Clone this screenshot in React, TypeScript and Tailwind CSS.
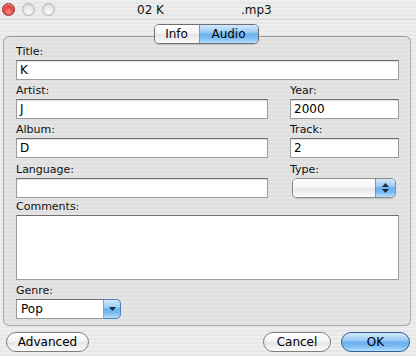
const font = { fontFamily: '"DejaVu Sans", "Liberation Sans", sans-serif' }

function Label({ children, className = '' }: { children: string; className?: string }) {
  return <div className={`h-[14px] text-[11px] leading-[14px] text-[#111] ${className}`}>{children}</div>
}

function Field({ value = '', className = '' }: { value?: string; className?: string }) {
  return (
    <div
      className={`flex h-[20px] items-center border border-[#9c9c9c] border-t-[#6e6e6e] bg-white pl-[3px] text-[12px] text-black shadow-[inset_0_1px_1px_rgba(0,0,0,0.12)] ${className}`}
    >
      {value}
    </div>
  )
}

function Light({ red }: { red?: boolean }) {
  return red ? (
    <div className="h-[13px] w-[13px] rounded-full border border-[#9a2a2a] bg-[radial-gradient(circle_at_50%_70%,#ff8a80_0%,#e0403a_55%,#b8221f_100%)] shadow-[inset_0_1px_1px_rgba(255,255,255,0.6)]" />
  ) : (
    <div className="h-[13px] w-[13px] rounded-full border border-[#b4b4b4] bg-[radial-gradient(circle_at_50%_70%,#fbfbfb_0%,#e2e2e2_60%,#cfcfcf_100%)]" />
  )
}

const aqua =
  'bg-[linear-gradient(to_bottom,#d2e9fd_0%,#9ccbf3_40%,#6bb0ee_50%,#7dbdf3_75%,#b7e0ff_100%)]'
const white =
  'bg-[linear-gradient(to_bottom,#ffffff_0%,#f5f5f5_45%,#e6e6e6_55%,#fbfbfb_100%)]'

function Pill({ children, blue, className = '' }: { children: string; blue?: boolean; className?: string }) {
  return (
    <div
      className={`flex h-[20px] items-center justify-center rounded-full border text-[12px] text-black ${
        blue ? `border-[#2c5f96] ${aqua}` : `border-[#7e7e7e] ${white}`
      } ${className}`}
    >
      {children}
    </div>
  )
}

export default function App() {
  return (
    <div
      style={font}
      className="flex h-[356px] w-[416px] flex-col overflow-hidden bg-[#ececec] bg-[repeating-linear-gradient(to_bottom,#eeeeee_0px,#eeeeee_2px,#e7e7e7_2px,#e7e7e7_4px)]"
    >
      {/* title bar */}
      <div className="flex h-[20px] items-center border-b border-[#d6d6d6] pl-[2px]">
        <div className="flex gap-[7px]">
          <Light red />
          <Light />
          <Light />
        </div>
        <div className="ml-[82px] flex gap-[77px] text-[12px] text-[#111]">
          <span>02 K</span>
          <span>.mp3</span>
        </div>
      </div>

      {/* tabs */}
      <div className="relative z-10 mt-[4px] flex justify-center pr-[4px]">
        <div className="flex h-[20px] overflow-hidden rounded-[5px] border border-[#6f6f6f] text-[12px] text-black shadow-[0_1px_1px_rgba(0,0,0,0.15)]">
          <div className={`flex w-[44px] items-center justify-center ${white}`}>Info</div>
          <div className={`flex w-[59px] items-center justify-center border-l border-[#7b94b0] ${aqua}`}>Audio</div>
        </div>
      </div>

      {/* group box */}
      <div className="ml-[3px] -mt-[8px] w-[408px] rounded-[6px] border border-[#a9a9a9] border-t-[#9a9a9a] bg-[#e3e3e3] bg-[repeating-linear-gradient(to_bottom,#e5e5e5_0px,#e5e5e5_2px,#dfdfdf_2px,#dfdfdf_4px)] pb-[6px] pl-[12px] pr-[10px] pt-[8px]">
        <Label>Title:</Label>
        <Field value="K" className="mt-[1px] w-[383px]" />

        <div className="mt-[4px] grid grid-cols-[252px_109px] gap-x-[22px]">
          <div>
            <Label>Artist:</Label>
            <Field value="J" className="mt-[1px]" />
          </div>
          <div>
            <Label>Year:</Label>
            <Field value="2000" className="mt-[1px]" />
          </div>
        </div>

        <div className="mt-[4px] grid grid-cols-[252px_109px] gap-x-[22px]">
          <div>
            <Label>Album:</Label>
            <Field value="D" className="mt-[1px]" />
          </div>
          <div>
            <Label>Track:</Label>
            <Field value="2" className="mt-[1px]" />
          </div>
        </div>

        <div className="mt-[5px] grid grid-cols-[252px_109px] gap-x-[22px]">
          <div>
            <Label>Language:</Label>
            <Field className="mt-[1px]" />
          </div>
          <div>
            <Label>Type:</Label>
            <div className="ml-[2px] mt-[1px] flex h-[20px] w-[104px] overflow-hidden rounded-[5px] border border-[#8a8a8a] shadow-[0_1px_1px_rgba(0,0,0,0.15)]">
              <div className={`flex-1 ${white}`} />
              <div className={`flex w-[20px] flex-col items-center justify-center gap-[2px] border-l border-[#7b94b0] ${aqua}`}>
                <svg width="7" height="4" viewBox="0 0 7 4">
                  <path d="M3.5 0L7 4H0z" fill="#1a2a40" />
                </svg>
                <svg width="7" height="4" viewBox="0 0 7 4">
                  <path d="M0 0h7L3.5 4z" fill="#1a2a40" />
                </svg>
              </div>
            </div>
          </div>
        </div>

        <Label className="mt-[2px]">Comments:</Label>
        <div className="mt-[1px] h-[65px] w-[383px] border border-[#9c9c9c] border-t-[#6e6e6e] bg-white" />

        <Label className="mt-[4px]">Genre:</Label>
        <div className="mt-[1px] flex h-[20px] w-[105px]">
          <div className="flex flex-1 items-center border border-[#9c9c9c] border-t-[#6e6e6e] bg-white pl-[4px] text-[12px] text-black">
            Pop
          </div>
          <div className={`flex w-[17px] items-center justify-center rounded-r-[5px] border border-l-0 border-[#4f7fb3] ${aqua}`}>
            <svg width="7" height="4" viewBox="0 0 7 4">
              <path d="M0 0h7L3.5 4z" fill="#1a2a40" />
            </svg>
          </div>
        </div>
      </div>

      {/* buttons */}
      <div className="mt-[6px] flex items-center px-[6px]">
        <Pill className="w-[83px]">Advanced</Pill>
        <div className="flex-1" />
        <Pill className="w-[68px]">Cancel</Pill>
        <Pill blue className="ml-[10px] w-[69px]">
          OK
        </Pill>
      </div>
    </div>
  )
}
